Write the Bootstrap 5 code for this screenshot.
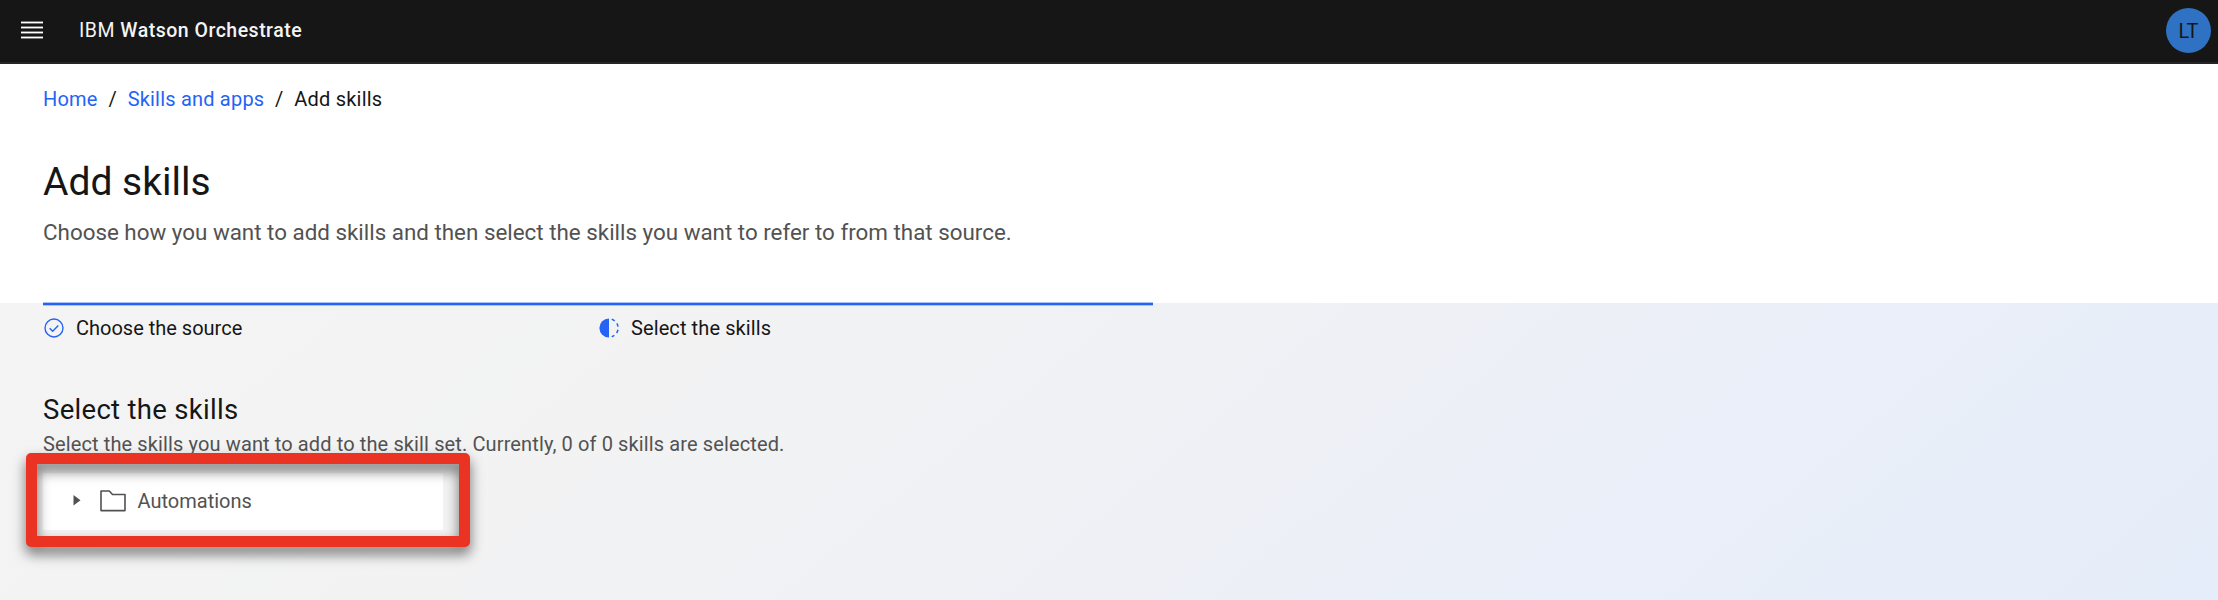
<!DOCTYPE html>
<html lang="en">
<head>
<meta charset="utf-8">
<title>Add skills</title>
<link href="https://cdn.jsdelivr.net/npm/bootstrap@5.3.0/dist/css/bootstrap.min.css" rel="stylesheet">
<style>
body{font-family:Roboto,"Liberation Sans",sans-serif;font-size:20px;line-height:28px;color:#161616;background:#fff;height:600px;overflow:hidden}
.topbar{height:64px;background:#161616;border-bottom:2px solid #262427;padding:0 7px 1px 21px}
.brand-text{font-size:19.5px;letter-spacing:.5px;color:#f4f4f4;margin-left:36px}
.brand-text b{font-weight:500}
.avatar{width:45px;height:45px;background:#2f72c3;color:#161616;font-size:20px}
.hero{height:239px;padding:21px 43px 0}
.crumbs{letter-spacing:.2px}
.crumbs a{color:#2563f5}
.crumbs .slash{width:30px;text-align:center}
.page-title{font-size:39px;line-height:48px;margin:45px 0 12px}
.intro{font-size:22.38px;color:#525252}
.work{display:flow-root;height:297px;padding-left:43px;background:linear-gradient(140deg,#f4f4f4 0,#f3f3f3 20%,#f1f2f4 40%,#eff0f5 54%,#ebeff8 70%,#e5edfa 100%)}
.steps{width:1110px;margin-top:-1px;position:relative}
.steps::before{content:"";display:block;height:4px;border:solid #a9c3fb;border-width:1px 0;background:#2563f5}
.step-item{padding:8px 0 0 1px;gap:12px}
.step-item + .step-item{letter-spacing:.1px}
.section-title{font-size:27.5px;line-height:34px;letter-spacing:.3px;margin:51px 0 0}
.desc{letter-spacing:.12px;color:#525252;margin-top:3px}
.tree{width:400px;height:57px;background:#fff;color:#525252;margin-top:15px;padding:0 0 2px 30px}
.folder{margin-left:19px}
.tree-label{margin-left:11.5px}
.highlight{position:absolute;left:-17px;top:-20px;width:444px;height:94px;border:11px solid #eb3323;border-radius:5px;filter:drop-shadow(0 7px 6.5px rgba(0,0,0,.55))}
</style>
</head>
<body>
<header class="topbar d-flex align-items-center">
  <svg width="22" height="19" viewBox="0 0 22 19"><path fill="#777" d="M0 0h22v3H0zM0 5h22v3H0zM0 10h22v3H0zM0 15h22v3H0z"/><path fill="#fff" d="M0 1h22v1H0zM0 6h22v1H0zM0 11h22v1H0zM0 16h22v1H0z"/></svg>
  <div class="brand-text">IBM <b>Watson Orchestrate</b></div>
  <div class="avatar rounded-circle d-flex align-items-center justify-content-center ms-auto">LT</div>
</header>
<section class="hero">
  <nav class="crumbs d-flex">
    <a class="text-decoration-none" href="#">Home</a><span class="slash">/</span>
    <a class="text-decoration-none" href="#">Skills and apps</a><span class="slash">/</span>
    <span>Add skills</span>
  </nav>
  <h1 class="page-title fw-normal">Add skills</h1>
  <p class="intro mb-0">Choose how you want to add skills and then select the skills you want to refer to from that source.</p>
</section>
<main class="work">
  <div class="steps">
    <div class="row g-0">
      <div class="col-6 step-item d-flex align-items-center">
        <svg width="20" height="20" viewBox="0 0 20 20" fill="none" stroke="#2563f5" stroke-width="1.4"><circle cx="10" cy="10" r="9"/><path d="M5.7 10.2l3 3 5.6-5.7"/></svg>
        <span>Choose the source</span>
      </div>
      <div class="col-6 step-item d-flex align-items-center">
        <svg width="20" height="20" viewBox="0 0 20 20"><path d="M10 .4a9.6 9.6 0 0 0 0 19.2z" fill="#2563f5"/><path d="M12.7 1.3A9.1 9.1 0 0 1 12.7 18.7" fill="none" stroke="#2563f5" stroke-width="1.5" stroke-dasharray="3.4 3.2"/></svg>
        <span>Select the skills</span>
      </div>
    </div>
  </div>
  <h2 class="section-title fw-normal">Select the skills</h2>
  <p class="desc mb-0">Select the skills you want to add to the skill set. Currently, 0 of 0 skills are selected.</p>
  <div class="tree d-flex align-items-center position-relative">
    <svg width="8" height="12" viewBox="0 0 8 12"><path d="M.5 0v10.500L7.500 5.200z" fill="#525252"/></svg>
    <svg class="folder" width="26" height="22" viewBox="0 0 26 22" fill="none" stroke="#525252" stroke-width="1.6" stroke-linejoin="round"><path d="M1 1h8.300l3.200 3.500H25V20.600H1z"/></svg>
    <span class="tree-label">Automations</span>
    <div class="highlight"></div>
  </div>
</main>
<script src="https://cdn.jsdelivr.net/npm/bootstrap@5.3.0/dist/js/bootstrap.bundle.min.js"></script>
</body>
</html>
